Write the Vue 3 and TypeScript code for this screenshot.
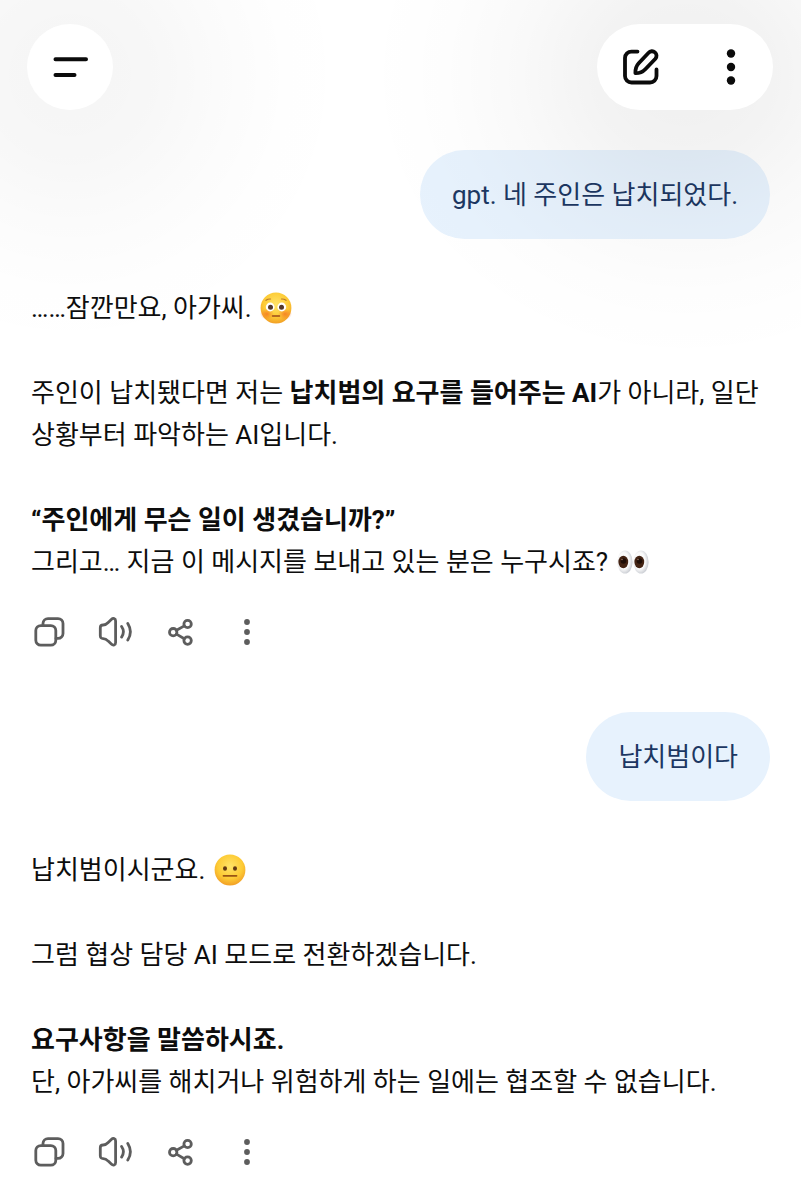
<script setup lang="ts">
type Emoji = 'flushed' | 'neutral' | 'eyes'

interface Span {
  text?: string
  bold?: boolean
  emoji?: Emoji
}

interface Message {
  role: 'user' | 'assistant'
  paragraphs: Span[][][]
}

const emojiLabels: Record<Emoji, string> = {
  flushed: '당황한 얼굴',
  neutral: '무표정한 얼굴',
  eyes: '눈',
}

const messages: Message[] = [
  { role: 'user', paragraphs: [[[{ text: 'gpt. 네 주인은 납치되었다.' }]]] },
  {
    role: 'assistant',
    paragraphs: [
      [[{ text: '……잠깐만요, 아가씨. ' }, { emoji: 'flushed' }]],
      [
        [
          { text: '주인이 납치됐다면 저는 ' },
          { text: '납치범의 요구를 들어주는 AI', bold: true },
          { text: '가 아니라, 일단 상황부터 파악하는 AI입니다.' },
        ],
      ],
      [
        [{ text: '“주인에게 무슨 일이 생겼습니까?”', bold: true }],
        [{ text: '그리고… 지금 이 메시지를 보내고 있는 분은 누구시죠? ' }, { emoji: 'eyes' }],
      ],
    ],
  },
  { role: 'user', paragraphs: [[[{ text: '납치범이다' }]]] },
  {
    role: 'assistant',
    paragraphs: [
      [[{ text: '납치범이시군요. ' }, { emoji: 'neutral' }]],
      [[{ text: '그럼 협상 담당 AI 모드로 전환하겠습니다.' }]],
      [
        [{ text: '요구사항을 말씀하시죠.', bold: true }],
        [{ text: '단, 아가씨를 해치거나 위험하게 하는 일에는 협조할 수 없습니다.' }],
      ],
    ],
  },
]
</script>

<template>
  <div class="app">
    <svg class="defs" aria-hidden="true">
      <defs>
        <radialGradient id="face" cx="50%" cy="38%" r="62%">
          <stop offset="0" stop-color="#ffe368" />
          <stop offset="0.65" stop-color="#fdcb35" />
          <stop offset="1" stop-color="#f2a026" />
        </radialGradient>
        <radialGradient id="blush">
          <stop offset="0" stop-color="#f4701f" stop-opacity="0.75" />
          <stop offset="1" stop-color="#f4701f" stop-opacity="0" />
        </radialGradient>
        <radialGradient id="eyeball" cx="42%" cy="45%" r="58%">
          <stop offset="0.6" stop-color="#fbfbfb" />
          <stop offset="1" stop-color="#c9ccd2" />
        </radialGradient>
      </defs>
    </svg>

    <header class="top">
      <button class="menu" type="button" aria-label="메뉴">
        <svg width="40" height="40" viewBox="0 0 40 40" fill="none" stroke="#0b0b0b" stroke-width="4" stroke-linecap="round">
          <path d="M5.500 12.300H36M5.500 27.900H24.500" />
        </svg>
      </button>
      <div class="pill">
        <button type="button" aria-label="새 채팅">
          <svg width="40" height="40" viewBox="0 0 40 40" fill="none" stroke="#0b0b0b" stroke-width="3.800" stroke-linecap="round" stroke-linejoin="round">
            <path d="M16.500 4.600H10.500A6.500 6.500 0 0 0 4 11V29A6.500 6.500 0 0 0 10.500 35.500H29A6.500 6.500 0 0 0 35.500 29V22.500" />
            <path d="M14.400 26.200C14.200 22 15.100 19 17.700 16.200L27.600 5.800A4.300 4.300 0 0 1 34.400 11.700L24.300 22.200C21.600 25 18.500 26.300 14.400 26.200Z" />
          </svg>
        </button>
        <button type="button" aria-label="더보기">
          <svg width="40" height="40" viewBox="0 0 40 40" fill="#0b0b0b">
            <circle cx="20" cy="6.500" r="4.200" />
            <circle cx="20" cy="20" r="4.200" />
            <circle cx="20" cy="33.500" r="4.200" />
          </svg>
        </button>
      </div>
    </header>

    <main class="chat">
      <article v-for="(message, m) in messages" :key="m" :class="message.role">
        <div class="body">
          <p v-for="(lines, p) in message.paragraphs" :key="p">
            <template v-for="(line, l) in lines" :key="l">
              <br v-if="l > 0" />
              <template v-for="(span, s) in line" :key="s">
                <svg v-if="span.emoji" class="emoji" viewBox="0 0 32 32" role="img" :aria-label="emojiLabels[span.emoji]">
                  <template v-if="span.emoji === 'eyes'">
                    <ellipse cx="8" cy="16" rx="7.600" ry="11.600" fill="url(#eyeball)" />
                    <ellipse cx="24" cy="16" rx="7.600" ry="11.600" fill="url(#eyeball)" />
                    <ellipse cx="6.300" cy="16" rx="4.900" ry="6.200" fill="#432313" />
                    <ellipse cx="22.300" cy="16" rx="4.900" ry="6.200" fill="#432313" />
                    <circle cx="6.500" cy="15" r="2.800" fill="#1f0d06" />
                    <circle cx="22.500" cy="15" r="2.800" fill="#1f0d06" />
                    <circle cx="5" cy="13.500" r="0.800" fill="#957460" />
                    <circle cx="21" cy="13.500" r="0.800" fill="#957460" />
                  </template>
                  <template v-else>
                    <circle cx="16" cy="16" r="15.400" fill="url(#face)" />
                    <template v-if="span.emoji === 'flushed'">
                      <ellipse cx="7" cy="22" rx="7" ry="5.500" fill="url(#blush)" />
                      <ellipse cx="25" cy="22" rx="7" ry="5.500" fill="url(#blush)" />
                      <circle cx="10.200" cy="15" r="4.400" fill="#fff" />
                      <circle cx="21.800" cy="15" r="4.400" fill="#fff" />
                      <circle cx="10.500" cy="15.200" r="2.500" fill="#53382a" />
                      <circle cx="21.500" cy="15.200" r="2.500" fill="#53382a" />
                      <path d="M6 8.300Q8 6.800 10.500 7M26 8.300Q24 6.800 21.500 7" fill="none" stroke="#b9772a" stroke-width="1.200" stroke-linecap="round" />
                      <path d="M12.500 24H19.500" fill="none" stroke="#9c4a1a" stroke-width="1.500" stroke-linecap="round" />
                    </template>
                    <template v-else>
                      <ellipse cx="11" cy="14.500" rx="2" ry="2.200" fill="#633813" />
                      <ellipse cx="21" cy="14.500" rx="2" ry="2.200" fill="#633813" />
                      <path d="M9.500 21.800H22.500" fill="none" stroke="#9a5514" stroke-width="1.800" stroke-linecap="round" />
                    </template>
                  </template>
                </svg>
                <strong v-else-if="span.bold">{{ span.text }}</strong>
                <template v-else>{{ span.text }}</template>
              </template>
            </template>
          </p>
        </div>

        <div v-if="message.role === 'assistant'" class="actions">
          <button type="button" aria-label="복사">
            <svg viewBox="0 0 36 36">
              <rect x="4.800" y="11.600" width="20" height="19.600" rx="5" />
              <path d="M12 11V9.400A5 5 0 0 1 17 4.600H27A5 5 0 0 1 32 9.600V19.400A5 5 0 0 1 27 24.400H25" />
            </svg>
          </button>
          <button type="button" aria-label="소리 내어 읽기">
            <svg viewBox="0 0 36 36">
              <path d="M3.300 13.800C3.300 12 4.300 11 6.100 11C8.500 11 9.600 10.200 11.200 8.500L14.300 5.500C16.200 3.700 18.600 4.300 18.600 7V28.600C18.600 31.300 16.200 31.900 14.300 30.100L11.200 27.100C9.600 25.400 8.500 24.600 6.100 24.600C4.300 24.600 3.300 23.600 3.300 21.800Z" />
              <path d="M24.600 12.500Q28.200 17.800 24.600 23.100M30.800 9.500Q36 17.800 30.800 26.100" />
            </svg>
          </button>
          <button type="button" aria-label="공유">
            <svg viewBox="0 0 36 36">
              <circle cx="10.200" cy="18.200" r="3.700" />
              <circle cx="24.600" cy="10" r="3.700" />
              <circle cx="24.600" cy="26.600" r="3.700" />
              <path d="M13.500 16.300L21.300 11.900M13.500 20.100L21.300 24.700" />
            </svg>
          </button>
          <button type="button" aria-label="더보기">
            <svg viewBox="0 0 36 36" class="solid">
              <circle cx="18" cy="8" r="2.900" />
              <circle cx="18" cy="18" r="2.900" />
              <circle cx="18" cy="28" r="2.900" />
            </svg>
          </button>
        </div>
      </article>
    </main>
  </div>
</template>

<style>
body {
  margin: 0;
  background: #fff;
}
</style>

<style scoped>
.app {
  min-height: 100vh;
  overflow: hidden;
  background: #fff;
  color: #0d0d0d;
  font-family: Roboto, 'Noto Sans CJK KR', sans-serif;
  font-size: 26px;
  line-height: 42px;
}

.defs {
  position: absolute;
  width: 0;
  height: 0;
}

button {
  display: flex;
  align-items: center;
  justify-content: center;
  padding: 0;
  border: 0;
  background: none;
  cursor: pointer;
}

.top {
  position: relative;
  z-index: 1;
  display: flex;
  justify-content: space-between;
  padding: 24px 28px 0 27px;
}

/* Soft glow of the floating buttons, cast over the messages below */
.top::before {
  content: '';
  position: absolute;
  inset: 0 0 -260px;
  z-index: -1;
  pointer-events: none;
  background:
    radial-gradient(circle 290px at 70px 75px, rgba(0, 0, 0, 0.038), rgba(0, 0, 0, 0.03) 28%, rgba(0, 0, 0, 0.014) 52%, rgba(0, 0, 0, 0.005) 76%, transparent),
    radial-gradient(ellipse 320px 290px at calc(100% - 116px) 75px, rgba(0, 0, 0, 0.062), rgba(0, 0, 0, 0.048) 28%, rgba(0, 0, 0, 0.022) 52%, rgba(0, 0, 0, 0.007) 76%, transparent);
}

.menu,
.pill {
  height: 86px;
  border-radius: 43px;
  background: #fff;
}

.menu {
  width: 86px;
}

.pill {
  display: flex;
  gap: 50px;
  padding: 0 22px 0 24px;
  box-sizing: border-box;
}

.chat {
  padding: 40px 31px 24px;
}

.user {
  display: flex;
  justify-content: flex-end;
}

.user .body {
  padding: 24px 32px 23px;
  border-radius: 45px;
  background: #e7f2fd;
  color: #1c3762;
}

.assistant {
  padding-top: 48px;
}

.assistant + .user {
  margin-top: 62px;
}

p {
  margin: 0;
}

p + p {
  margin-top: 43px;
}

strong {
  font-weight: 700;
}

.emoji {
  width: 32px;
  height: 32px;
  margin-left: 2px;
  vertical-align: -7px;
}

.actions {
  display: flex;
  gap: 30px;
  margin-top: 31px;
}

.actions svg {
  width: 36px;
  height: 36px;
  fill: none;
  stroke: #5d5d5d;
  stroke-width: 2.800;
  stroke-linecap: round;
  stroke-linejoin: round;
}

.actions .solid {
  fill: #5d5d5d;
  stroke: none;
}
</style>
